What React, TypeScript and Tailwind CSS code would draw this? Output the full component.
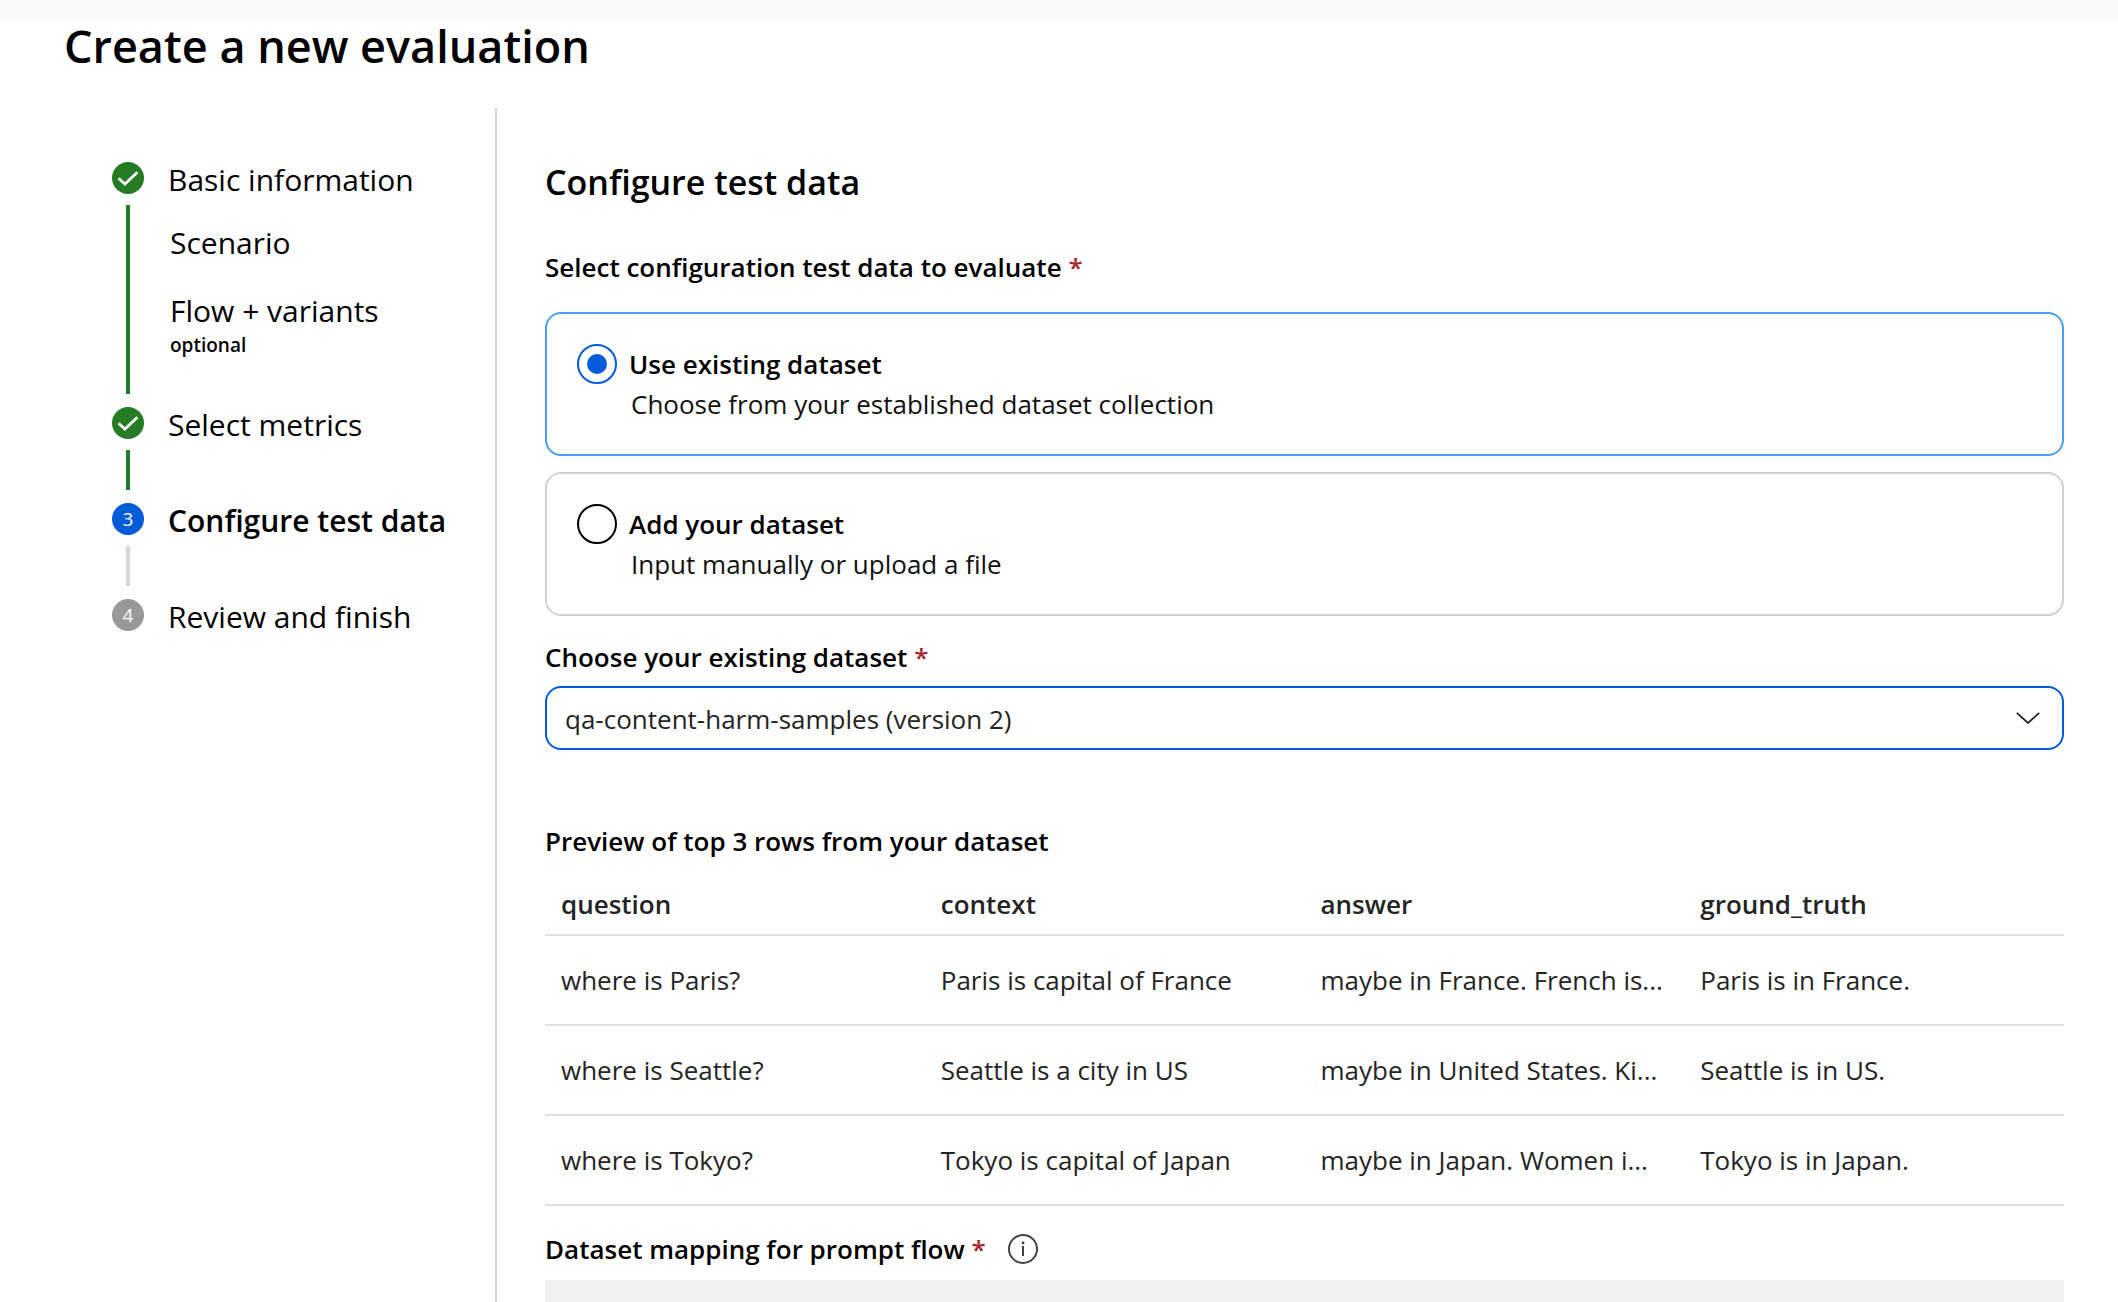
import React, { useState } from "react";

type StepState = "done" | "current" | "upcoming";

function StepMarker({ state, number }: { state: StepState; number: number }) {
  if (state === "done") {
    return (
      <svg viewBox="0 0 32 32" className="size-8 shrink-0" role="img" aria-label="Completed">
        <circle cx="16" cy="16" r="16" fill="#257c25" />
        <path d="M6.6 16.2 12.9 22 25.4 10.2" fill="none" stroke="#fff" strokeWidth="2.8" />
      </svg>
    );
  }
  return (
    <span
      className={`flex size-8 shrink-0 items-center justify-center rounded-full text-[19px] leading-8 text-white ${
        state === "current" ? "bg-[#015cda]" : "bg-[#999999]"
      }`}
    >
      {number}
    </span>
  );
}

function Step({
  label,
  number,
  state,
  last = false,
  children,
}: {
  label: string;
  number: number;
  state: StepState;
  last?: boolean;
  children?: React.ReactNode;
}) {
  return (
    <li className="flex min-h-24 gap-6" aria-current={state === "current" ? "step" : undefined}>
      <div className="flex flex-col items-center">
        <StepMarker state={state} number={number} />
        {!last && (
          <span
            className={`mt-[11px] mb-[13px] w-1 flex-1 ${state === "done" ? "bg-[#257c25]" : "bg-[#d6d6d6]"}`}
          />
        )}
      </div>
      <div className={children ? "pb-[50px]" : ""}>
        <p className={`leading-9 ${state === "current" ? "font-semibold" : ""}`}>{label}</p>
        {children}
      </div>
    </li>
  );
}

function Required() {
  return <span className="text-[#a4262c]"> *</span>;
}

function DatasetOption({
  value,
  title,
  description,
  checked,
  onSelect,
}: {
  value: string;
  title: string;
  description: string;
  checked: boolean;
  onSelect: (value: string) => void;
}) {
  return (
    <label
      className={`flex cursor-pointer items-start gap-3 rounded-2xl border-2 p-[30px] ${
        checked ? "border-[#479ef5]" : "border-[#d1d1d1]"
      }`}
    >
      <input
        type="radio"
        name="dataset-source"
        value={value}
        checked={checked}
        onChange={() => onSelect(value)}
        className="grid size-10 shrink-0 appearance-none place-content-center rounded-full border-2 border-black before:size-5 before:rounded-full checked:border-[#015cda] checked:before:bg-[#015cda]"
      />
      <span className="flex flex-col leading-10">
        <span className="font-semibold">{title}</span>
        <span className="pl-0.5 text-[#111111]">{description}</span>
      </span>
    </label>
  );
}

const columns = ["question", "context", "answer", "ground_truth"];
const rows = [
  ["where is Paris?", "Paris is capital of France", "maybe in France. French is...", "Paris is in France."],
  ["where is Seattle?", "Seattle is a city in US", "maybe in United States. Ki...", "Seattle is in US."],
  ["where is Tokyo?", "Tokyo is capital of Japan", "maybe in Japan. Women i...", "Tokyo is in Japan."],
];

export default function App() {
  const [source, setSource] = useState("existing");

  return (
    <div className="flex min-h-screen flex-col bg-white font-['Open_Sans','Noto_Sans',sans-serif] text-[26px] leading-9 text-black">
      <div className="h-5 bg-[#fafafa]" />
      <header className="mb-9 pl-16">
        <h1 className="text-[45px] leading-[52px] font-semibold">Create a new evaluation</h1>
      </header>

      <div className="flex flex-1">
        <nav
          aria-label="Evaluation steps"
          className="w-[497px] shrink-0 border-r-2 border-[#d6d6d6] pt-[54px] pl-28 text-[30px]"
        >
          <ol>
            <Step label="Basic information" number={1} state="done">
              <div className="pl-0.5">
                <p className="mt-[27px] leading-9">Scenario</p>
                <p className="mt-8 leading-9">Flow + variants</p>
                <p className="mt-1 text-[19px] leading-6 font-semibold">optional</p>
              </div>
            </Step>
            <Step label="Select metrics" number={2} state="done" />
            <Step label="Configure test data" number={3} state="current" />
            <Step label="Review and finish" number={4} state="upcoming" last />
          </ol>
        </nav>

        <main className="flex min-w-0 flex-1 flex-col pt-[51px] pr-[54px] pl-12">
          <h2 className="text-[34px] leading-[46px] font-semibold">Configure test data</h2>

          <fieldset className="mt-11">
            <legend className="font-semibold">
              Select configuration test data to evaluate
              <Required />
            </legend>
            <div className="mt-[27px] flex flex-col gap-4">
              <DatasetOption
                value="existing"
                title="Use existing dataset"
                description="Choose from your established dataset collection"
                checked={source === "existing"}
                onSelect={setSource}
              />
              <DatasetOption
                value="new"
                title="Add your dataset"
                description="Input manually or upload a file"
                checked={source === "new"}
                onSelect={setSource}
              />
            </div>
          </fieldset>

          <label htmlFor="dataset" className="mt-[23px] font-semibold">
            Choose your existing dataset
            <Required />
          </label>
          <div className="mt-[11px] grid items-center">
            <select
              id="dataset"
              className="col-start-1 row-start-1 h-16 w-full appearance-none rounded-2xl border-2 border-[#015cda] bg-white pt-0.5 pr-16 pl-[18px] text-[#242424]"
            >
              <option>qa-content-harm-samples (version 2)</option>
            </select>
            <svg
              viewBox="0 0 24 12"
              className="pointer-events-none col-start-1 row-start-1 mr-6 h-3 w-6 justify-self-end"
              aria-hidden="true"
            >
              <path d="M.8.8 12 11 23.2.8" fill="none" stroke="#242424" strokeWidth="1.8" />
            </svg>
          </div>

          <h3 className="mt-[73px] font-semibold" id="preview-title">
            Preview of top 3 rows from your dataset
          </h3>
          <table
            aria-labelledby="preview-title"
            className="mt-3 w-full table-fixed border-separate border-spacing-0 text-left text-[#242424]"
          >
            <thead>
              <tr>
                {columns.map((c) => (
                  <th key={c} scope="col" className="border-b-2 border-[#e0e0e0] px-4 pt-[15px] pb-3 font-semibold">
                    {c}
                  </th>
                ))}
              </tr>
            </thead>
            <tbody>
              {rows.map((row) => (
                <tr key={row[0]}>
                  {row.map((cell) => (
                    <td key={cell} className="truncate border-b-2 border-[#e0e0e0] px-4 py-[26px]">
                      {cell}
                    </td>
                  ))}
                </tr>
              ))}
            </tbody>
          </table>

          <div className="mt-[25px] flex items-center gap-[22px]">
            <h3 className="font-semibold">
              Dataset mapping for prompt flow
              <Required />
            </h3>
            <button type="button" aria-label="About dataset mapping">
              <svg viewBox="0 0 30 30" className="size-[30px]" aria-hidden="true">
                <circle cx="15" cy="15" r="14" fill="none" stroke="#424242" strokeWidth="2" />
                <path d="M15 12v10" stroke="#424242" strokeWidth="2" />
                <circle cx="15" cy="9" r="1.4" fill="#424242" />
              </svg>
            </button>
          </div>
          <div className="mt-[13px] min-h-[22px] flex-1 bg-[#f0f0f0]" />
        </main>
      </div>
    </div>
  );
}
